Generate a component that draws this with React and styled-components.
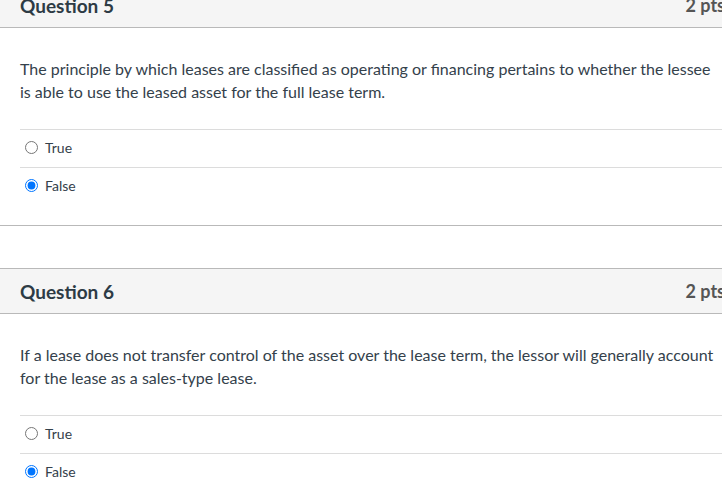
import React from 'react'
import styled, { createGlobalStyle } from 'styled-components'

const GlobalStyle = createGlobalStyle`
  html, body {
    margin: 0;
    padding: 0;
    background: #fff;
    overflow: hidden;
  }
  body {
    font-family: Lato, "Liberation Sans", sans-serif;
    color: #2d3b45;
  }
`

const Page = styled.div`
  width: 745px;
  margin-top: -18px;
`

const Card = styled.div`
  border-top: 1px solid #b9b9b9;
  border-bottom: 1px solid #b9b9b9;
  margin-bottom: 42px;
`

const Header = styled.div`
  display: flex;
  align-items: center;
  justify-content: space-between;
  height: 44px;
  padding: 0 20px;
  background: #f5f5f5;
  border-bottom: 1px solid #b9b9b9;
`

const Title = styled.h2`
  margin: 0;
  font-size: 19px;
  font-weight: 700;
  color: #2d3b45;
`

const Points = styled.span`
  font-size: 18px;
  font-weight: 700;
  color: #555;
`

const Body = styled.div`
  padding: 29px 20px 20px;
`

const Text = styled.p`
  margin: 0;
  font-size: 16px;
  line-height: 23px;
  color: #34414b;
`

const Answers = styled.div`
  margin-top: 26px;
`

const Answer = styled.label`
  display: flex;
  align-items: center;
  height: 34px;
  padding-bottom: 3px;
  border-top: 1px solid #dcdcdc;
`

const Radio = styled.input`
  margin: 0 3px 0 5px;
  width: 13px;
  height: 13px;
`

const AnswerText = styled.span`
  margin-left: 4px;
  font-size: 14px;
  color: #34414b;
`

const questions = [
  {
    name: 'Question 5',
    text: 'The principle by which leases are classified as operating or financing pertains to whether the lessee is able to use the leased asset for the full lease term.',
  },
  {
    name: 'Question 6',
    text: 'If a lease does not transfer control of the asset over the lease term, the lessor will generally account for the lease as a sales-type lease.',
  },
]

const App = () => {
  return (
    <Page>
      <GlobalStyle />
      {questions.map((q) => (
        <Card key={q.name}>
          <Header>
            <Title>{q.name}</Title>
            <Points>2 pts</Points>
          </Header>
          <Body>
            <Text>{q.text}</Text>
            <Answers>
              <Answer>
                <Radio type="radio" name={q.name} readOnly />
                <AnswerText>True</AnswerText>
              </Answer>
              <Answer>
                <Radio type="radio" name={q.name} defaultChecked />
                <AnswerText>False</AnswerText>
              </Answer>
            </Answers>
          </Body>
        </Card>
      ))}
    </Page>
  )
}

export default App
